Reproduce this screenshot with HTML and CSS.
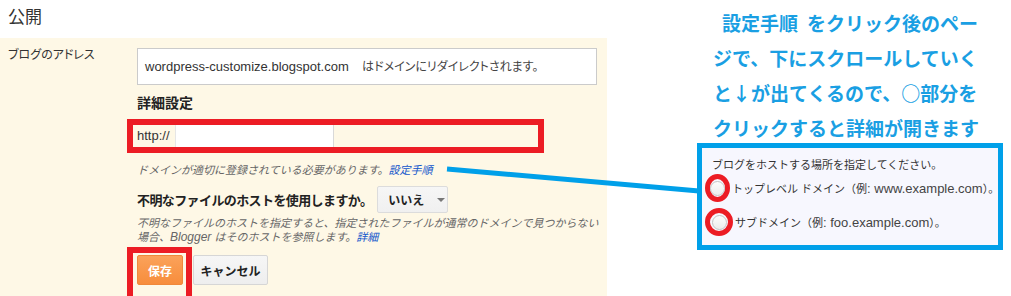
FILE: index.html
```html
<!DOCTYPE html>
<html lang="ja">
	<head>
		<meta charset="UTF-8" />
		<meta name="viewport" content="width=device-width, initial-scale=1.0" />
		<title>公開 - ブログのアドレス</title>
		<link rel="stylesheet" href="styles.css">
	</head>
	<body>
		<div class="page">
			<div class="main">
				<h2 class="title">公開</h2>

				<div class="panel">
					<div class="label">ブログのアドレス</div>

					<div class="field">
						<div class="address">
							<span class="en">wordpress-customize.blogspot.com</span>
							<span class="address-note">はドメインにリダイレクトされます。</span>
						</div>

						<h3 class="sub-heading">詳細設定</h3>

						<div class="mark mark-wide">
							<div class="input-group">
								<span class="prefix">http://</span>
								<span class="url-input"></span>
							</div>
						</div>

						<p class="hint">ドメインが適切に登録されている必要があります。<a href="#">設定手順</a></p>

						<div class="question">
							<span>不明なファイルのホストを使用しますか。</span>
							<button class="select">いいえ<span class="caret"></span></button>
						</div>

						<p class="hint hint-long">不明なファイルのホストを指定すると、指定されたファイルが通常のドメインで見つからない<br>場合、<span class="en">Blogger</span> はそのホストを参照します。<a href="#">詳細</a></p>

						<div class="actions">
							<div class="mark mark-save">
								<button class="btn btn-save">保存</button>
							</div>
							<button class="btn btn-cancel">キャンセル</button>
						</div>
					</div>
				</div>
			</div>

			<aside class="note">
				<div class="note-text">
					<div class="first-line">設定手順<span class="gap"></span>をクリック後のペー</div>
					<div>ジで、下にスクロールしていく</div>
					<div>と↓が出てくるので、○部分を</div>
					<div>クリックすると詳細が開きます</div>
				</div>

				<div class="note-box">
					<p class="note-box-title">ブログをホストする場所を指定してください。</p>
					<label class="radio-row">
						<span class="ring"><span class="radio"></span></span>
						<span>トップレベル ドメイン（例<span class="en">: www.example.com</span>）。</span>
					</label>
					<label class="radio-row">
						<span class="ring"><span class="radio"></span></span>
						<span>サブドメイン（例<span class="en">: foo.example.com</span>）。</span>
					</label>
				</div>
			</aside>

			<!-- connector from the link to the screenshot box -->
			<svg class="connector" width="1011" height="296" viewBox="0 0 1011 296">
				<line x1="447" y1="169" x2="699" y2="191" stroke="#00a0e9" stroke-width="5" />
			</svg>
		</div>
	</body>
</html>
```

FILE: styles.css
```css
* {
	margin: 0;
	padding: 0;
	box-sizing: border-box;
}

html, body {
	height: 100%;
	overflow: hidden;
}

body {
	background: #fff;
	font-family: 'Liberation Sans', Arial, 'Noto Sans CJK JP', sans-serif;
	font-size: 12px;
	color: #222;
}

.page {
	position: relative;
	display: flex;
	height: 296px;
	overflow: hidden;
}

.main {
	width: 607px;
	display: flex;
	flex-direction: column;
}

.title {
	height: 38px;
	padding-left: 8px;
	font-size: 17px;
	font-weight: normal;
	line-height: 35px;
	color: #333;
}

.panel {
	flex: 1;
	min-height: 0;
	overflow: hidden;
	background: #fef8e6;
	padding-top: 10px;
	display: grid;
	grid-template-columns: 137px 460px;
}

.label {
	padding-left: 8px;
	line-height: 14px;
	color: #333;
	font-feature-settings: "palt";
}

.en {
	font-family: 'Liberation Sans', Arial, sans-serif;
	font-size: 13px;
}

.address {
	height: 37px;
	border: 1px solid #cbcbcb;
	background: #fff;
	padding-left: 7px;
	line-height: 35px;
	color: #333;
	white-space: nowrap;
}

.address-note {
	margin-left: 10px;
	font-size: 12px;
	color: #444;
	font-feature-settings: "palt";
}

.sub-heading {
	margin-top: 11px;
	font-size: 14px;
	line-height: 14px;
	font-weight: bold;
	color: #222;
}

.mark {
	border: 6px solid #ec1c24;
	margin-left: -10px;
}

.mark-wide {
	margin-top: 9px;
	width: 417px;
	height: 34px;
}

.input-group {
	display: flex;
	height: 22px;
}

.prefix {
	width: 42px;
	padding-left: 4px;
	font-size: 13px;
	line-height: 22px;
	color: #333;
}

.url-input {
	width: 159px;
	background: #fff;
	border-left: 1px solid #e6e6e6;
	border-right: 1px solid #d9d9d9;
}

.hint {
	margin-top: 10px;
	font-size: 11px;
	line-height: 14px;
	font-style: italic;
	color: #666;
	white-space: nowrap;
}

.hint a {
	color: #15c;
	text-decoration: none;
}

.hint-long {
	margin-top: 3px;
}

.hint-long .en {
	font-size: 12px;
}

.question {
	margin-top: 9px;
	height: 27px;
	display: flex;
	align-items: center;
	font-size: 13px;
	font-weight: bold;
	letter-spacing: -0.6px;
	color: #222;
}

.select {
	margin-left: 5px;
	width: 71px;
	height: 27px;
	display: flex;
	align-items: center;
	padding-left: 10px;
	border: 1px solid #dcdcdc;
	border-radius: 2px;
	background: linear-gradient(#f6f6f6, #f0f0f0);
	font-family: inherit;
	font-size: 12px;
	font-weight: bold;
	letter-spacing: 0;
	color: #222;
}

.caret {
	margin-left: 13px;
	border-left: 4px solid transparent;
	border-right: 4px solid transparent;
	border-top: 4px solid #777;
}

.actions {
	margin-top: 3px;
	display: flex;
	align-items: flex-start;
}

.mark-save {
	padding: 2px 3px 20px 4px;
}

.btn {
	height: 30px;
	border-radius: 2px;
	font-family: inherit;
	font-size: 12px;
	font-weight: bold;
	cursor: pointer;
}

.btn-save {
	width: 46px;
	border: 1px solid #f0883a;
	background: linear-gradient(#fba25a, #f78d3c);
	color: #fff;
}

.btn-cancel {
	width: 75px;
	margin: 8px 0 0 1px;
	border: 1px solid #d6d6d6;
	background: linear-gradient(#f6f6f6, #eeeeee);
	color: #222;
}

.note {
	flex: 1;
}

.note-text {
	padding: 5px 0 0 106px;
	font-family: 'Noto Sans CJK JP', sans-serif;
	font-size: 19px;
	font-weight: bold;
	line-height: 35px;
	color: #1a9fe3;
	white-space: nowrap;
}

.first-line {
	padding-left: 9px;
}

.gap {
	display: inline-block;
	width: 9px;
}

.note-box {
	margin: -2px 0 0 90px;
	width: 306px;
	height: 107px;
	border: 5px solid #00a0e9;
	background: #f7f7fe;
	padding: 10px 0 0 3px;
	color: #333;
	font-size: 11px;
	white-space: nowrap;
}

.note-box-title {
	padding-left: 7px;
	line-height: 14px;
}

.radio-row {
	display: flex;
	align-items: center;
	height: 28px;
	margin-top: 2px;
}

.radio-row + .radio-row {
	margin-top: 6px;
}

.radio-row .en {
	color: #444;
}

.ring {
	width: 28px;
	height: 28px;
	border: 5px solid #ec1c24;
	border-radius: 50%;
	display: flex;
	align-items: center;
	justify-content: center;
	margin-right: 2px;
}

.radio {
	width: 15px;
	height: 15px;
	border: 1px solid #c4c4c4;
	border-radius: 50%;
	background: linear-gradient(#fdfdfd, #ececec);
}

.connector {
	position: absolute;
	top: 0;
	left: 0;
	pointer-events: none;
}
```
